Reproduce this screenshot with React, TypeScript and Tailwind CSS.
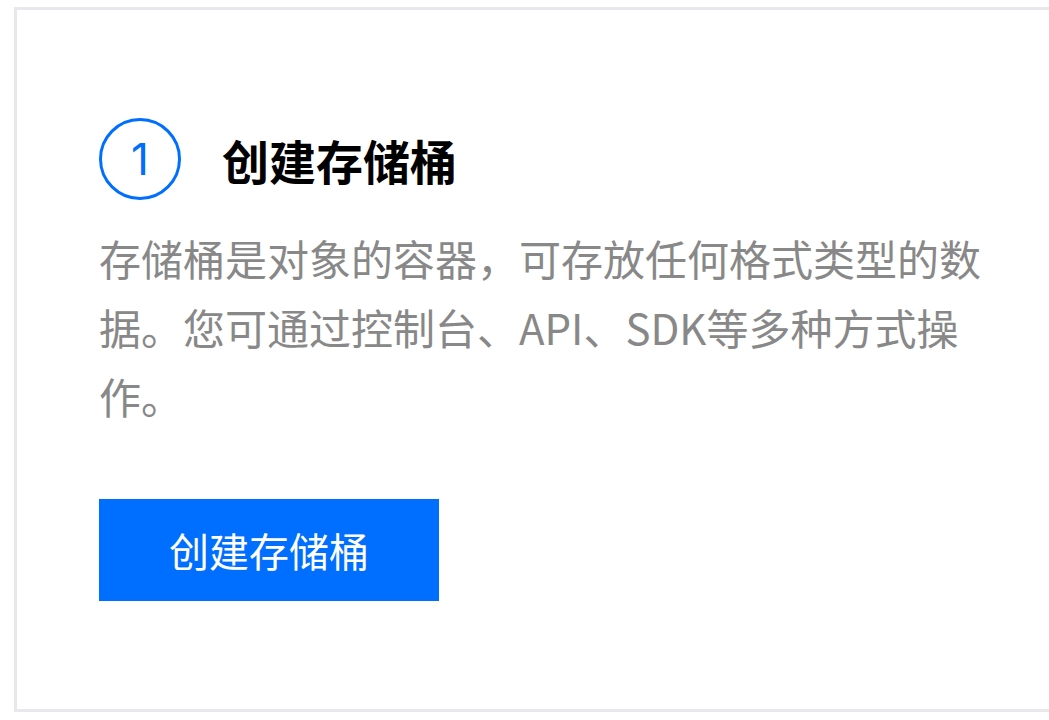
export default function App() {
  return (
    <div
      className="min-h-[720px] w-full overflow-hidden bg-white pl-[14px] pt-[7px]"
      style={{ fontFamily: '"Noto Sans CJK SC", "Noto Sans", sans-serif' }}
    >
      <div className="h-[705px] border-[3px] border-r-0 border-[#e8e8ec] pl-[82px] pt-[108px]">
        <div className="flex items-center">
          <div className="flex h-[82px] w-[82px] items-center justify-center rounded-full border-[3px] border-[#006eff] font-['Inter',sans-serif] text-[44px] font-normal leading-none text-[#006eff]">
            1
          </div>
          <h2 className="ml-[41px] text-[47px] font-bold leading-none text-black">创建存储桶</h2>
        </div>
        <p className="mt-[23px] w-[890px] text-[42px] leading-[69px] text-[#888888]">
          存储桶是对象的容器，可存放任何格式类型的数据。您可通过控制台、API、SDK等多种方式操作。
        </p>
        <button className="mt-[69px] flex h-[102px] w-[340px] items-center justify-center bg-[#006eff] text-[40px] text-white">
          创建存储桶
        </button>
      </div>
    </div>
  );
}
